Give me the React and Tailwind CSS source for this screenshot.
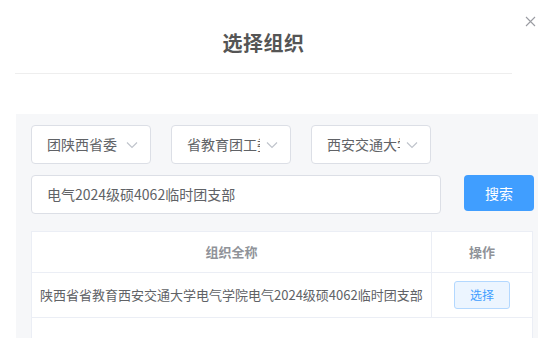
import React from "react";

const Chevron = () => (
  <svg width="12" height="8" viewBox="0 0 12 8" className="shrink-0">
    <path d="M1 1.5 L6 6.5 L11 1.5" fill="none" stroke="#c0c4cc" strokeWidth="1.2" />
  </svg>
);

function Select({ label }) {
  return (
    <div className="w-[120px] h-[39px] bg-white border border-[#dcdfe6] rounded-[4px] flex items-center pl-[15px] pr-[11px]">
      <span className="w-[73px] overflow-hidden whitespace-nowrap text-[14px] text-[#606266]">{label}</span>
      <span className="ml-[6px] flex items-center">
        <Chevron />
      </span>
    </div>
  );
}

export default function App() {
  return (
    <div
      className="w-[550px] h-[338px] bg-white relative overflow-hidden"
      style={{ fontFamily: '"Noto Sans CJK SC", "Liberation Sans", sans-serif' }}
    >
      <div className="w-[527px] h-[73px] flex items-center justify-center pt-[12px]">
        <h1 className="text-[20px] font-bold text-[#555555] tracking-[0.5px]">选择组织</h1>
      </div>
      <button className="absolute top-[15px] left-[524px] w-[12px] h-[12px] flex items-center justify-center">
        <svg width="11" height="11" viewBox="0 0 11 11">
          <path d="M1 1 L10 10 M10 1 L1 10" stroke="#9a9ca2" strokeWidth="1.1" fill="none" />
        </svg>
      </button>
      <div className="ml-[15px] w-[497px] border-t border-[#eeeeee]" />

      <div className="ml-[16px] mt-[40px] w-[522px] h-[240px] bg-[#f6f7f9] pt-[11px] pl-[15px]">
        <div className="flex gap-[20px]">
          <Select label="团陕西省委" />
          <Select label="省教育团工委" />
          <Select label="西安交通大学" />
        </div>

        <div className="flex items-start mt-[11px]">
          <div className="w-[410px] h-[39px] bg-white border border-[#dcdfe6] rounded-[4px] flex items-center px-[15px]">
            <span className="text-[14px] text-[#606266] whitespace-nowrap">电气2024级硕4062临时团支部</span>
          </div>
          <button className="ml-[23px] w-[70px] h-[36px] bg-[#409eff] rounded-[4px] text-white text-[14px] flex items-center justify-center">
            搜索
          </button>
        </div>

        <div className="mt-[17px] w-[502px] h-[120px] bg-white border-l border-r border-t border-[#ebeef5]">
          <div className="flex h-[41px] border-b border-[#ebeef5] text-[13px] font-bold text-[#909399]">
            <div className="w-[400px] border-r border-[#ebeef5] flex items-center justify-center">组织全称</div>
            <div className="flex-1 flex items-center justify-center">操作</div>
          </div>
          <div className="flex h-[45px] border-b border-[#ebeef5]">
            <div className="w-[400px] border-r border-[#ebeef5] flex items-center pl-[8px] text-[13px] text-[#606266] whitespace-nowrap overflow-hidden">
              陕西省省教育西安交通大学电气学院电气2024级硕4062临时团支部
            </div>
            <div className="flex-1 flex items-center justify-center">
              <button className="w-[56px] h-[28px] bg-[#ecf5ff] border border-[#b3d8ff] rounded-[3px] text-[12px] text-[#409eff] flex items-center justify-center">
                选择
              </button>
            </div>
          </div>
        </div>
      </div>
    </div>
  );
}
